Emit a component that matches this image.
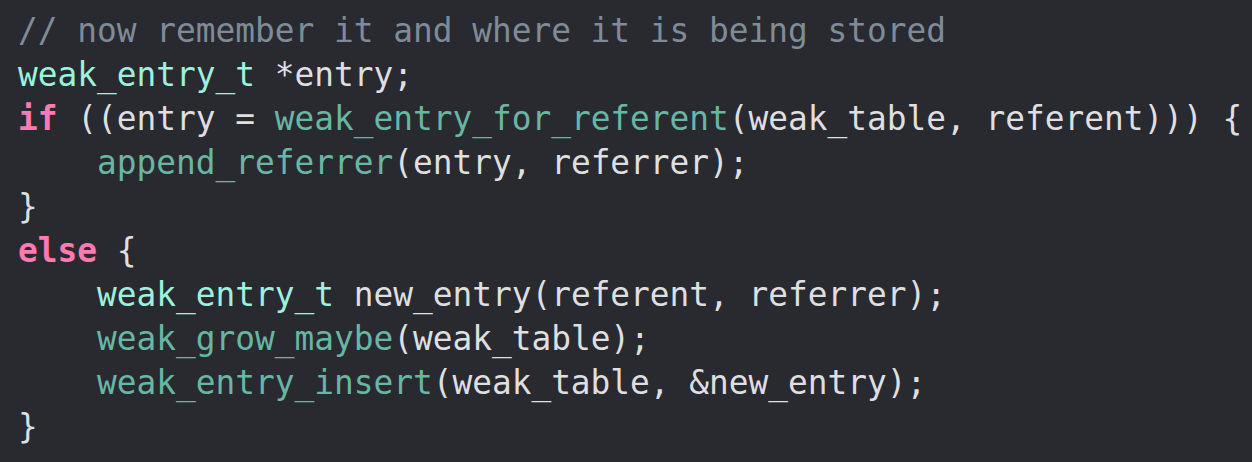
import React from "react";

const Kw = ({ children }: { children: React.ReactNode }) => <span className="text-[#ff7ab2] font-bold">{children}</span>;
const Ty = ({ children }: { children: React.ReactNode }) => <span className="text-[#9ef1dd]">{children}</span>;
const Fn = ({ children }: { children: React.ReactNode }) => <span className="text-[#67b7a4]">{children}</span>;

const App = () => {
  return (
    <div className="w-[1252px] h-[462px] bg-[#292a30] overflow-hidden">
      {/* CODE BLOCK */}
      <pre className="pt-[9px] pl-[18px] text-[32.8px] leading-[44px] text-[#dfdfe0] font-['DejaVu_Sans_Mono',monospace] whitespace-pre">
        <div className="text-[#7f8c98]">// now remember it and where it is being stored</div>
        <div><Ty>weak_entry_t</Ty> *entry;</div>
        <div><Kw>if</Kw> ((entry = <Fn>weak_entry_for_referent</Fn>(weak_table, referent))) {"{"}</div>
        <div>{"    "}<Fn>append_referrer</Fn>(entry, referrer);</div>
        <div>{"}"}</div>
        <div><Kw>else</Kw> {"{"}</div>
        <div>{"    "}<Ty>weak_entry_t</Ty> new_entry(referent, referrer);</div>
        <div>{"    "}<Fn>weak_grow_maybe</Fn>(weak_table);</div>
        <div>{"    "}<Fn>weak_entry_insert</Fn>(weak_table, &amp;new_entry);</div>
        <div>{"}"}</div>
      </pre>
    </div>
  );
};

export default App;
